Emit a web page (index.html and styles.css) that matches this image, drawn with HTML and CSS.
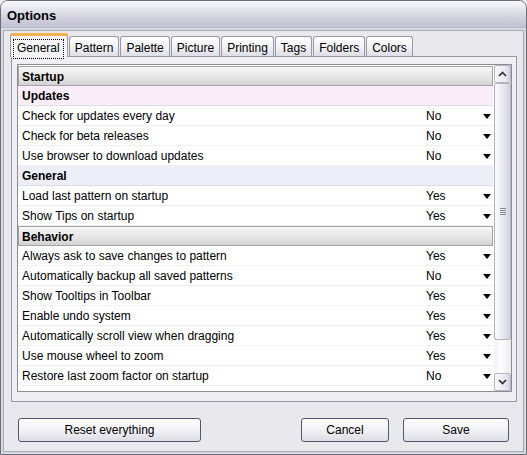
FILE: index.html
```html
<!DOCTYPE html>
<html>
<head>
<meta charset="utf-8">
<link rel="stylesheet" href="styles.css">
</head>
<body>
<div class="window">
  <div class="titlebar">Options</div>
  <div class="client">
    <div class="tabs">
      <div class="tab sel"><span class="focus">General</span></div>
      <div class="tab">Pattern</div>
      <div class="tab">Palette</div>
      <div class="tab">Picture</div>
      <div class="tab">Printing</div>
      <div class="tab">Tags</div>
      <div class="tab">Folders</div>
      <div class="tab">Colors</div>
    </div>
    <div class="panel">
      <div class="list">
        <div class="rows">
          <div class="row cat">Startup</div>
          <div class="row sub pink">Updates</div>
          <div class="row item"><span>Check for updates every day</span><span class="val">No<i></i></span></div>
          <div class="row item"><span>Check for beta releases</span><span class="val">No<i></i></span></div>
          <div class="row item"><span>Use browser to download updates</span><span class="val">No<i></i></span></div>
          <div class="row sub blue">General</div>
          <div class="row item"><span>Load last pattern on startup</span><span class="val">Yes<i></i></span></div>
          <div class="row item"><span>Show Tips on startup</span><span class="val">Yes<i></i></span></div>
          <div class="row cat">Behavior</div>
          <div class="row item"><span>Always ask to save changes to pattern</span><span class="val">Yes<i></i></span></div>
          <div class="row item"><span>Automatically backup all saved patterns</span><span class="val">No<i></i></span></div>
          <div class="row item"><span>Show Tooltips in Toolbar</span><span class="val">Yes<i></i></span></div>
          <div class="row item"><span>Enable undo system</span><span class="val">Yes<i></i></span></div>
          <div class="row item"><span>Automatically scroll view when dragging</span><span class="val">Yes<i></i></span></div>
          <div class="row item"><span>Use mouse wheel to zoom</span><span class="val">Yes<i></i></span></div>
          <div class="row item"><span>Restore last zoom factor on startup</span><span class="val">No<i></i></span></div>
          <div class="row item"><span>Use light colors for the thumbnail background</span><span class="val">No<i></i></span></div>
        </div>
        <div class="sb">
          <div class="sbbtn"><svg width="9" height="6" viewBox="0 0 9 6"><path d="M1 5 L4.5 1.5 L8 5" fill="none" stroke="#303040" stroke-width="1.7"/></svg></div>
          <div class="track">
            <div class="thumb"><span class="grip"></span></div>
          </div>
          <div class="sbbtn"><svg width="9" height="6" viewBox="0 0 9 6"><path d="M1 1 L4.5 4.5 L8 1" fill="none" stroke="#303040" stroke-width="1.7"/></svg></div>
        </div>
      </div>
    </div>
    <div class="buttons">
      <button class="btn reset">Reset everything</button>
      <button class="btn cancel">Cancel</button>
      <button class="btn save">Save</button>
    </div>
  </div>
</div>
</body>
</html>
```

FILE: styles.css
```css
html, body {
  margin: 0;
  padding: 0;
}
body {
  width: 527px;
  height: 455px;
  overflow: hidden;
  font-family: "Liberation Sans", Arial, sans-serif;
  font-size: 12px;
  color: #000;
  background: #e9e8ec;
}
.window {
  width: 527px;
  height: 455px;
  box-sizing: border-box;
  border: 1px solid #6e6e7a;
  border-radius: 8px 8px 0 0;
  background: #e9e8ec;
  display: flex;
  flex-direction: column;
  overflow: hidden;
}
.titlebar {
  height: 27px;
  flex: none;
  box-sizing: border-box;
  padding-left: 6px;
  line-height: 29px;
  font-weight: bold;
  font-size: 13px;
  background: linear-gradient(#fbfbfd 0%, #e6e6ee 30%, #cfcfdc 70%, #c2c2d1 100%);
  border-bottom: 1px solid #b8b8c4;
}
.client {
  flex: 1;
  display: flex;
  flex-direction: column;
  padding: 5px 9px 0 9px;
  box-shadow: inset 0 0 0 2px #d8d8e0, inset 0 0 0 3px #a9a9b4;
}
.tabs {
  display: flex;
  align-items: flex-end;
  height: 23px;
  padding-left: 0;
  gap: 1px;
  position: relative;
  z-index: 1;
}
.tab {
  height: 20px;
  box-sizing: border-box;
  padding: 4px 5px 0 5px;
  border: 1px solid #9a9aa6;
  border-bottom: none;
  border-radius: 3px 3px 0 0;
  background: linear-gradient(#ffffff, #f1f1f5 55%, #dedee8);
  line-height: 15px;
  white-space: nowrap;
}
.tab.sel {
  height: 24px;
  margin-bottom: -1px;
  padding: 4px 4px 0 3px;
  border-top: 3px solid #f2b34e;
  background: #f5f5f7;
}
.focus {
  display: inline-block;
  outline: 1px dotted #000;
  outline-offset: 0;
  padding: 1px 3px 2px 3px;
}
.panel {
  height: 346px;
  box-sizing: border-box;
  border: 1px solid #9a9aa6;
  background: #efeef2;
  padding: 7px 4px 9px 5px;
  margin-left: 1px;
  display: flex;
}
.list {
  flex: 1;
  display: flex;
  border: 1px solid #8c8c94;
  background: #fff;
  overflow: hidden;
}
.rows {
  flex: 1;
  overflow: hidden;
  padding-top: 1px;
}
.row {
  height: 20px;
  box-sizing: border-box;
  display: flex;
  align-items: center;
  padding-left: 4px;
  padding-top: 1px;
  white-space: nowrap;
}
.cat {
  font-weight: bold;
  border: 1px solid #a2a2a8;
  padding-left: 3px;
  background: linear-gradient(#f7f7f7, #e4e4e4 60%, #d3d3d3);
}
.sub {
  font-weight: bold;
  border-bottom: 1px solid #dddde6;
}
.pink {
  background: #fbedfa;
}
.blue {
  background: #edeff8;
}
.item {
  display: grid;
  grid-template-columns: 1fr 69px;
  border-bottom: 1px solid #f0f0f0;
}
.val {
  display: flex;
  align-items: center;
  justify-content: space-between;
  padding: 0 2px 0 2px;
}
.val i {
  width: 0;
  height: 0;
  border-left: 4px solid transparent;
  border-right: 4px solid transparent;
  border-top: 5px solid #000;
}
.sb {
  width: 17px;
  flex: none;
  display: flex;
  flex-direction: column;
  margin-left: 1px;
  background: linear-gradient(90deg, #f3f3f6, #fdfdfe 40%, #ececf1);
}
.sbbtn {
  height: 18px;
  box-sizing: border-box;
  border: 1px solid #b4b4c2;
  border-radius: 2px;
  background: linear-gradient(90deg, #fbfbfd, #e7e7ef 70%, #d4d4e0);
  display: flex;
  align-items: center;
  justify-content: center;
}
.track {
  flex: 1;
  display: flex;
  flex-direction: column;
}
.thumb {
  height: 257px;
  box-sizing: border-box;
  border: 1px solid #b4b4c2;
  border-radius: 2px;
  background: linear-gradient(90deg, #fafafc, #ececf2 45%, #d2d2dd);
  display: flex;
  align-items: center;
  justify-content: center;
}
.grip {
  width: 6px;
  height: 7px;
  background: repeating-linear-gradient(#8a8a96 0 1px, transparent 1px 2px);
}
.buttons {
  display: flex;
  align-items: center;
  padding: 16px 8px 0 8px;
}
.btn {
  height: 24px;
  box-sizing: border-box;
  border: 1px solid #50586a;
  border-radius: 3px;
  background: linear-gradient(#ffffff, #f2f2f6 50%, #dcdce4);
  font-family: "Liberation Sans", Arial, sans-serif;
  font-size: 12px;
  color: #000;
  padding: 0;
}
.reset {
  width: 183px;
}
.cancel {
  width: 88px;
  margin-left: auto;
}
.save {
  width: 106px;
  margin-left: 14px;
}
```
